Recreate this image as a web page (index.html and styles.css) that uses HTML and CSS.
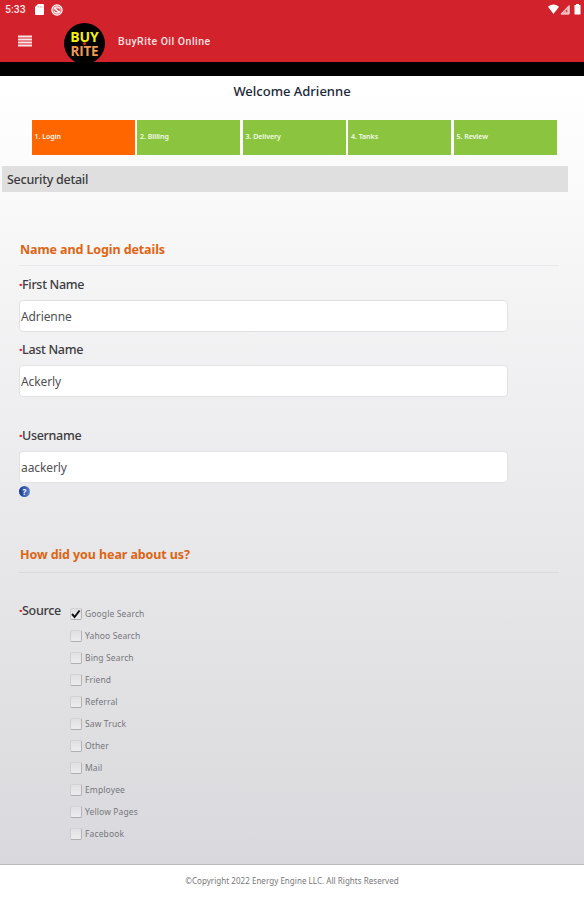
FILE: index.html
```html
<!DOCTYPE html>
<html lang="en">
<head>
<meta charset="utf-8">
<title>BuyRite Oil Online</title>
<link rel="stylesheet" href="styles.css">
</head>
<body>
<header class="top">
  <div class="status">
    <span class="clock">5:33</span>
    <svg class="sd" width="9" height="11" viewBox="0 0 9 11"><path d="M3 0h5q1 0 1 1v9q0 1-1 1H1q-1 0-1-1V3z" fill="#fff"/><path d="M3.300 2v2M5.200 2v2M7 2v2" stroke="#e9a3a6" stroke-width=".7"/></svg>
    <svg class="sync" width="12" height="12" viewBox="0 0 12 12"><circle cx="6" cy="6" r="5.100" fill="#e9858b" stroke="#fff" stroke-width="1.200"/><path d="M3 4.500Q6 1.500 9 4.500M3 7.500Q6 10.500 9 7.500M3.500 4l5 4.500" fill="none" stroke="#fff" stroke-width="1.100"/><path d="M6.500 5.500l2 .3M4 6.500l1.500 1.500" stroke="#d2232c"/></svg>
    <svg class="signals" width="34" height="11" viewBox="0 0 34 11"><path d="M0 2.700Q5.500-1.500 11 2.700L5.500 10z" fill="#fff"/><path d="M12.500 10.200L21.500 1v9.200z" fill="#f0a9ad"/><path d="M13 10L21 1.700V10z" fill="none" stroke="#f9d9da"/><path d="M18 6l1 2" stroke="#d2232c"/><path d="M28 0h3v1h1.500v9.500h-6V1H28z" fill="#fff"/></svg>
  </div>
  <div class="bar">
    <svg class="menu" width="14" height="12" viewBox="0 0 14 12"><path d="M0 1.500h14M0 4.500h14M0 7.500h14M0 10.500h14" stroke="#fbe4e5" stroke-width="1.800"/></svg>
    <div class="logo"><span class="buy">BUY</span><i class="drop"></i><span class="rite">RITE</span></div>
    <span class="title">BuyRite Oil Online</span>
  </div>
</header>
<main>
  <h1>Welcome Adrienne</h1>
  <nav class="steps">
    <span class="step current">1. Login</span><span class="step">2. Billing</span><span class="step">3. Delivery</span><span class="step">4. Tanks</span><span class="step">5. Review</span>
  </nav>
  <h2>Security detail</h2>
  <section class="details">
    <h3>Name and Login details</h3>
    <div class="field"><label><b>·</b><span>First Name</span></label><div class="input">Adrienne</div></div>
    <div class="field"><label><b>·</b><span>Last Name</span></label><div class="input">Ackerly</div></div>
    <div class="field user"><label><b>·</b><span>Username</span></label><div class="input">aackerly</div></div>
    <span class="help">?</span>
  </section>
  <section class="hear">
    <h3>How did you hear about us?</h3>
    <div class="source">
      <label><b>·</b><span>Source</span></label>
      <ul>
        <li><i class="box"><svg width="12" height="12" viewBox="0 0 12 12"><path d="M2 6L4.600 9L9.600 2.500" fill="none" stroke="#111" stroke-width="2"/></svg></i><span>Google Search</span></li>
        <li><i class="box"></i><span>Yahoo Search</span></li>
        <li><i class="box"></i><span>Bing Search</span></li>
        <li><i class="box"></i><span>Friend</span></li>
        <li><i class="box"></i><span>Referral</span></li>
        <li><i class="box"></i><span>Saw Truck</span></li>
        <li><i class="box"></i><span>Other</span></li>
        <li><i class="box"></i><span>Mail</span></li>
        <li><i class="box"></i><span>Employee</span></li>
        <li><i class="box"></i><span>Yellow Pages</span></li>
        <li><i class="box"></i><span>Facebook</span></li>
      </ul>
    </div>
  </section>
</main>
<footer><span>©Copyright 2022 Energy Engine LLC. All Rights Reserved</span></footer>
</body>
</html>
```
FILE: styles.css
```css
* { box-sizing: border-box; }
body { margin: 0; width: 584px; height: 900px; overflow: hidden; background: #fff; font-family: "Noto Sans", "Open Sans", sans-serif; color: #3c3c40; display: flex; flex-direction: column; }
h1, h2, h3, ul { margin: 0; padding: 0; }
.top { height: 76px; background: #d2232c; border-bottom: 14px solid #000; flex: none; }
.status { height: 19px; display: flex; align-items: center; padding: 0 2px 0 5px; color: #fbe3e4; }
.clock { font: 500 10.500px/18px Roboto, sans-serif; width: 30px; }
.sync { margin-left: 7px; }
.signals { margin-left: auto; }
.bar { height: 43px; display: flex; align-items: flex-start; padding-left: 18px; }
.menu { margin-top: 16px; }
.logo { width: 41px; height: 41px; border-radius: 50%; background: #000; margin: 4px 0 0 32px; display: flex; flex-direction: column; align-items: center; padding-top: 7px; font: bold 14px/14px "Open Sans", sans-serif; position: relative; }
.logo span { display: block; height: 14px; line-height: 14px; }
.buy { color: #f4f012; }
.rite { color: #ef9b55; font-size: 13.500px; letter-spacing: -.2px; }
.drop { position: absolute; top: 19px; left: 19px; width: 3px; height: 3px; border-radius: 50%; background: #e02b1c; }
.title { font: 500 10.500px/16px Roboto, sans-serif; color: #fae0e1; margin: 15px 0 0 13px; letter-spacing: .5px; }
main { height: 789px; flex: none; background: linear-gradient(to bottom, #fff 0, #fafafa 110px, #f3f3f4 230px, #ebebed 400px, #e2e2e4 590px, #d9d9dd 789px); border-bottom: 1px solid #b9b9bd; }
h1 { text-align: center; font-size: 13px; line-height: 20px; font-weight: 500; color: #1c2838; padding-top: 5px; }
.steps { display: grid; grid-template-columns: repeat(5, 103px); column-gap: 2.500px; margin: 19px 0 0 31.500px; }
.step { height: 35px; background: #8bc53f; color: #f4fae9; font-size: 7px; font-weight: 600; line-height: 34px; padding-left: 3px; letter-spacing: -.03px; }
.step.current { background: #ff6600; }
h2 { width: 566px; height: 26px; margin: 11px 0 0 2px; padding-left: 5px; background: #dfdfdf; font-size: 12.500px; font-weight: 500; line-height: 27px; letter-spacing: -.26px; }
.details { margin-left: 19px; padding-top: 47px; height: 343px; }
h3 { width: 540px; height: 27px; padding-left: 1px; font-size: 12.500px; font-weight: 700; line-height: 21px; letter-spacing: -.1px; color: #dd6514; border-bottom: 1px solid #e9e9ee; }
.field { height: 65px; padding-top: 9px; }
.field.user { margin-top: 21px; }
label { display: flex; font-size: 12.500px; font-weight: 500; line-height: 20px; letter-spacing: -.3px; }
label b { width: 3px; color: #e2233a; flex: none; font-weight: 900; }
.input { width: 489px; height: 32px; margin-top: 5px; border: 1px solid #e2e2e4; border-radius: 4px; background: #fff; font-size: 12px; line-height: 31px; padding-left: 1px; color: #505054; letter-spacing: -.1px; }
.help { display: block; width: 11px; height: 11px; margin-top: 4px; border-radius: 50%; background: linear-gradient(90deg, #17378b, #5b83cf); color: #fff; font-size: 8px; font-weight: 700; line-height: 11px; text-align: center; }
.hear { margin-left: 19px; padding-top: 9px; }
.hear h3 { height: 29px; border-color: #dbdbdf; }
.source { display: flex; padding-top: 28px; }
.source > label { width: 51px; }
ul { list-style: none; padding-top: 2px; }
li { height: 22px; display: flex; align-items: flex-start; font-size: 8.500px; line-height: 21px; color: #77777c; letter-spacing: .13px; }
.box { width: 12px; height: 12px; margin: 5px 3px 0 0; border: 1px solid #c1c1c5; border-top-color: #d3d3d6; border-left-color: #cecfd2; border-right-color: #b3b3b6; border-bottom-color: #aeaeb1; border-radius: 2px; background: linear-gradient(#e0e0e2, #ececee); }
.box svg { display: block; margin: -1px; }
footer { height: 35px; text-align: center; font-size: 8px; line-height: 32px; color: #77777a; letter-spacing: .04px; }
```
